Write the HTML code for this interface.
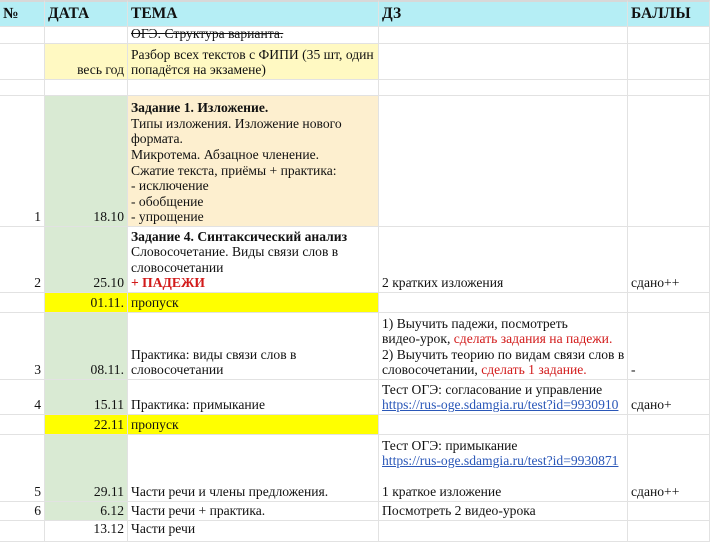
<!DOCTYPE html>
<html><head><meta charset="utf-8"><style>
*{margin:0;padding:0;box-sizing:border-box}
body{width:710px;height:540px;overflow:hidden;background:#fff;font-family:"Liberation Serif","DejaVu Serif",serif;font-size:13.6px;color:#111;position:relative}
.c{position:absolute;border-right:1px solid #e2e2e2;border-bottom:1px solid #e2e2e2;padding:0 3px 1px 3px;display:flex;flex-direction:column;justify-content:flex-end;line-height:15.6px;overflow:hidden}
.r{text-align:right;align-items:flex-end}
.h{font-weight:bold;font-size:15.5px;background:#b5eef5;justify-content:center;border-top:2px solid #d8d8d8;padding-top:1px}
.g{background:#d9ead3}.y{background:#ffff00}.ly{background:#fff9c2}.o{background:#fdefcf}
.red{color:#d21a1a}a{color:#2a57b8;text-decoration:underline}
b{font-weight:bold}
.nw{white-space:nowrap}
</style></head><body>
<div class="c h" style="left:0;top:0;width:45px;height:27px">№</div>
<div class="c h" style="left:45px;top:0;width:83px;height:27px">ДАТА</div>
<div class="c h" style="left:128px;top:0;width:251px;height:27px">ТЕМА</div>
<div class="c h" style="left:379px;top:0;width:249px;height:27px">ДЗ</div>
<div class="c h" style="left:628px;top:0;width:82px;height:27px">БАЛЛЫ</div>
<div class="c" style="left:0;top:27px;width:45px;height:17px"></div>
<div class="c" style="left:45px;top:27px;width:83px;height:17px"></div>
<div class="c" style="left:128px;top:27px;width:251px;height:17px"><s>ОГЭ. Структура варианта.</s></div>
<div class="c" style="left:379px;top:27px;width:249px;height:17px"></div>
<div class="c" style="left:628px;top:27px;width:82px;height:17px"></div>
<div class="c" style="left:0;top:44px;width:45px;height:36px"></div>
<div class="c r ly" style="left:45px;top:44px;width:83px;height:36px">весь год</div>
<div class="c ly" style="left:128px;top:44px;width:251px;height:36px">Разбор всех текстов с ФИПИ (35 шт, один попадётся на экзамене)</div>
<div class="c" style="left:379px;top:44px;width:249px;height:36px"></div>
<div class="c" style="left:628px;top:44px;width:82px;height:36px"></div>
<div class="c" style="left:0;top:80px;width:45px;height:16px"></div>
<div class="c" style="left:45px;top:80px;width:83px;height:16px"></div>
<div class="c" style="left:128px;top:80px;width:251px;height:16px"></div>
<div class="c" style="left:379px;top:80px;width:249px;height:16px"></div>
<div class="c" style="left:628px;top:80px;width:82px;height:16px"></div>
<div class="c r" style="left:0;top:96px;width:45px;height:131px">1</div>
<div class="c r g" style="left:45px;top:96px;width:83px;height:131px">18.10</div>
<div class="c o" style="left:128px;top:96px;width:251px;height:131px"><div><b>Задание 1. Изложение.</b><br>Типы изложения. Изложение нового формата.<br>Микротема. Абзацное членение.<br>Сжатие текста, приёмы + практика:<br>- исключение<br>- обобщение<br>- упрощение</div></div>
<div class="c" style="left:379px;top:96px;width:249px;height:131px"></div>
<div class="c" style="left:628px;top:96px;width:82px;height:131px"></div>
<div class="c r" style="left:0;top:227px;width:45px;height:66px">2</div>
<div class="c r g" style="left:45px;top:227px;width:83px;height:66px">25.10</div>
<div class="c" style="left:128px;top:227px;width:251px;height:66px"><div><b>Задание 4. Синтаксический анализ</b><br>Словосочетание. Виды связи слов в словосочетании<br><b class="red">+ ПАДЕЖИ</b></div></div>
<div class="c" style="left:379px;top:227px;width:249px;height:66px">2 кратких изложения</div>
<div class="c" style="left:628px;top:227px;width:82px;height:66px">сдано++</div>
<div class="c" style="left:0;top:293px;width:45px;height:20px"></div>
<div class="c r y" style="left:45px;top:293px;width:83px;height:20px">01.11.</div>
<div class="c y" style="left:128px;top:293px;width:251px;height:20px">пропуск</div>
<div class="c" style="left:379px;top:293px;width:249px;height:20px"></div>
<div class="c" style="left:628px;top:293px;width:82px;height:20px"></div>
<div class="c r" style="left:0;top:313px;width:45px;height:67px">3</div>
<div class="c r g" style="left:45px;top:313px;width:83px;height:67px">08.11.</div>
<div class="c" style="left:128px;top:313px;width:251px;height:67px">Практика: виды связи слов в словосочетании</div>
<div class="c" style="left:379px;top:313px;width:249px;height:67px"><div class="nw">1) Выучить падежи, посмотреть<br>видео-урок, <span class="red">сделать задания на падежи.</span><br>2) Выучить теорию по видам связи слов в<br>словосочетании, <span class="red">сделать 1 задание.</span></div></div>
<div class="c" style="left:628px;top:313px;width:82px;height:67px">-</div>
<div class="c r" style="left:0;top:380px;width:45px;height:35px">4</div>
<div class="c r g" style="left:45px;top:380px;width:83px;height:35px">15.11</div>
<div class="c" style="left:128px;top:380px;width:251px;height:35px">Практика: примыкание</div>
<div class="c" style="left:379px;top:380px;width:249px;height:35px"><div>Тест ОГЭ: согласование и управление<br><a>https://rus-oge.sdamgia.ru/test?id=9930910</a></div></div>
<div class="c" style="left:628px;top:380px;width:82px;height:35px">сдано+</div>
<div class="c" style="left:0;top:415px;width:45px;height:20px"></div>
<div class="c r y" style="left:45px;top:415px;width:83px;height:20px">22.11</div>
<div class="c y" style="left:128px;top:415px;width:251px;height:20px">пропуск</div>
<div class="c" style="left:379px;top:415px;width:249px;height:20px"></div>
<div class="c" style="left:628px;top:415px;width:82px;height:20px"></div>
<div class="c r" style="left:0;top:435px;width:45px;height:67px">5</div>
<div class="c r g" style="left:45px;top:435px;width:83px;height:67px">29.11</div>
<div class="c" style="left:128px;top:435px;width:251px;height:67px">Части речи и члены предложения.</div>
<div class="c" style="left:379px;top:435px;width:249px;height:67px"><div>Тест ОГЭ: примыкание<br><a>https://rus-oge.sdamgia.ru/test?id=9930871</a><br><br>1 краткое изложение</div></div>
<div class="c" style="left:628px;top:435px;width:82px;height:67px">сдано++</div>
<div class="c r" style="left:0;top:502px;width:45px;height:19px">6</div>
<div class="c r g" style="left:45px;top:502px;width:83px;height:19px">6.12</div>
<div class="c" style="left:128px;top:502px;width:251px;height:19px">Части речи + практика.</div>
<div class="c" style="left:379px;top:502px;width:249px;height:19px">Посмотреть 2 видео-урока</div>
<div class="c" style="left:628px;top:502px;width:82px;height:19px"></div>
<div class="c" style="left:0;top:521px;width:45px;height:21px"></div>
<div class="c r" style="left:45px;top:521px;width:83px;height:21px;justify-content:flex-start">13.12</div>
<div class="c" style="left:128px;top:521px;width:251px;height:21px;justify-content:flex-start">Части речи</div>
<div class="c" style="left:379px;top:521px;width:249px;height:21px"></div>
<div class="c" style="left:628px;top:521px;width:82px;height:21px"></div>
</body></html>
